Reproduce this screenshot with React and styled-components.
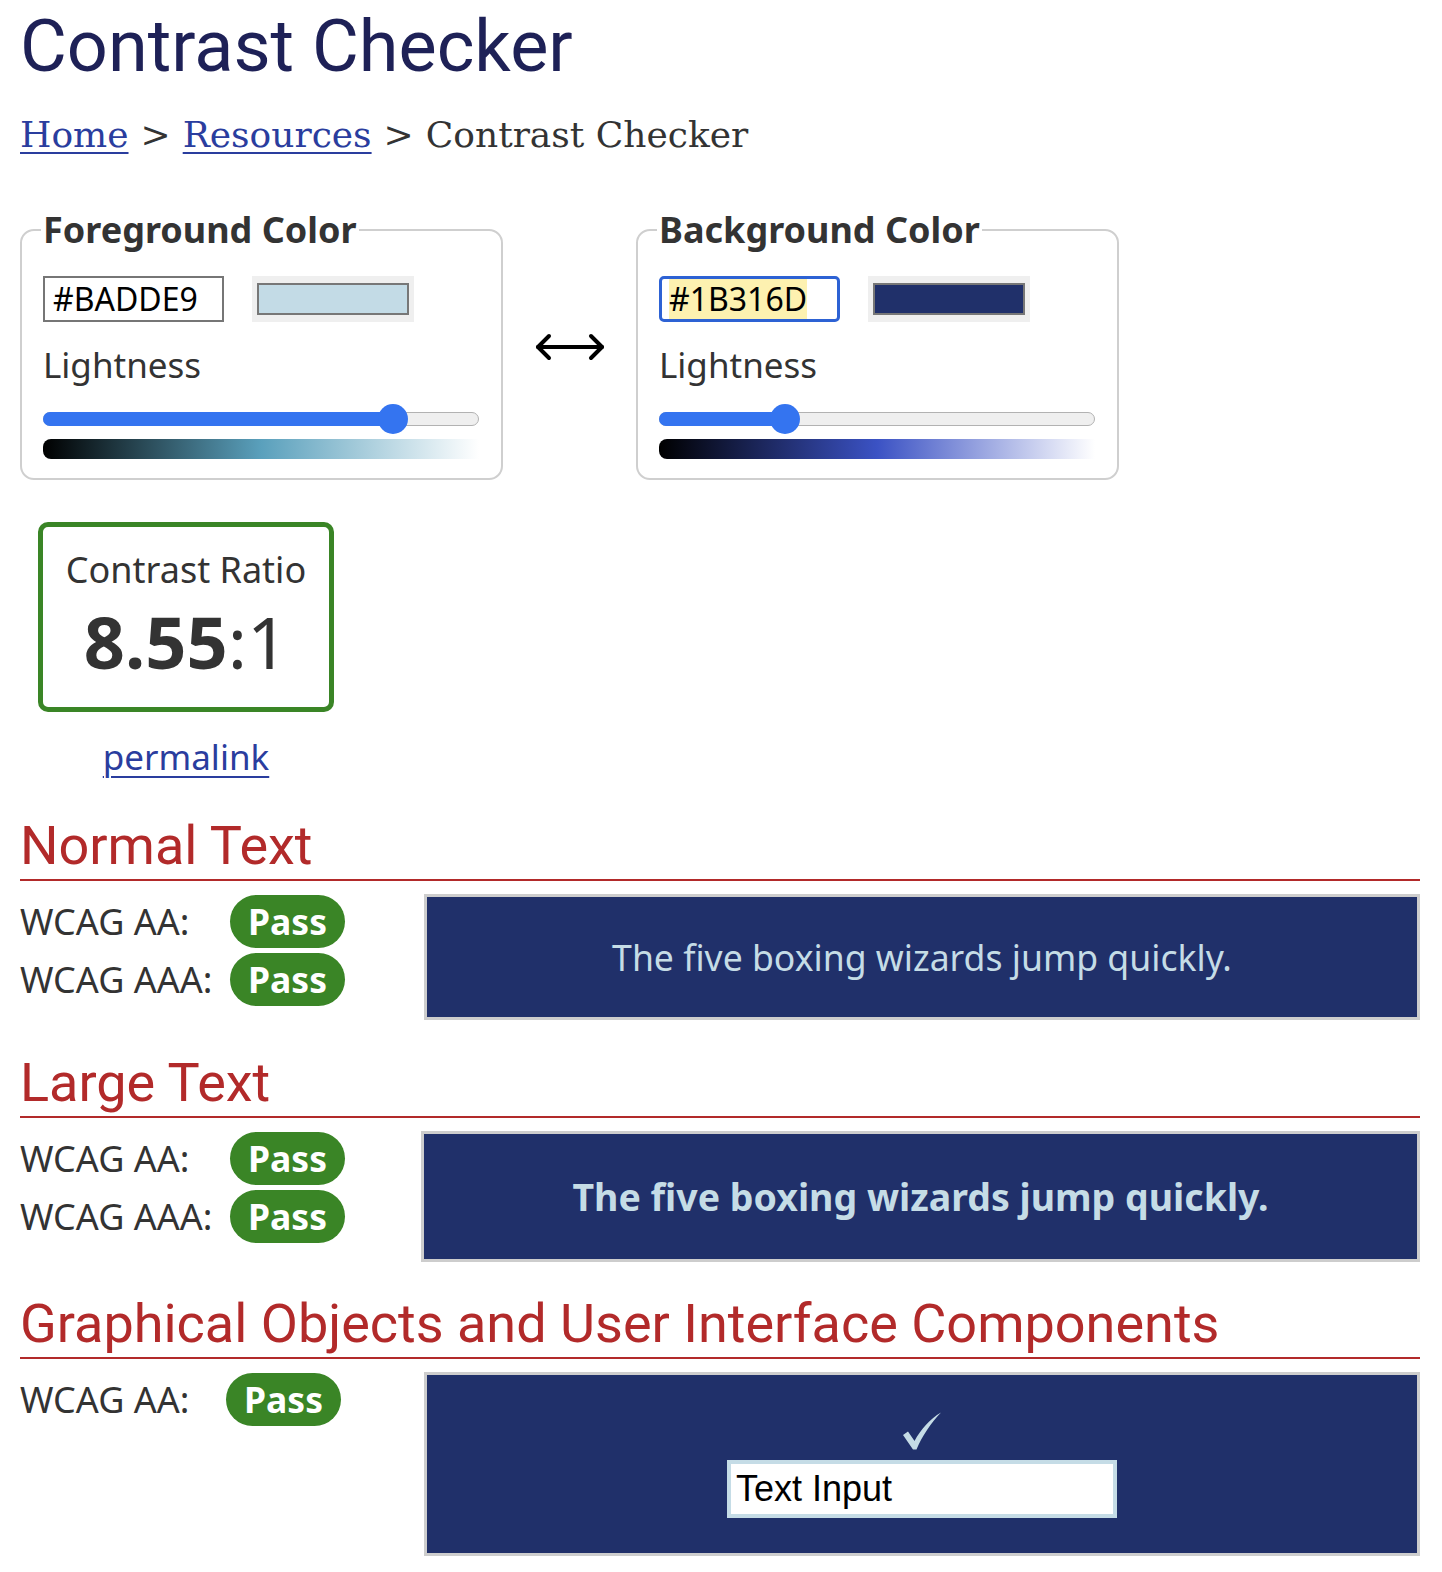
import React from "react";
import styled, { createGlobalStyle } from "styled-components";

const Global = createGlobalStyle`
  html, body { margin: 0; padding: 0; background: #fff; }
  body { font-family: "Noto Sans", "Open Sans", sans-serif; color: #333; }
  * { box-sizing: border-box; }
`;

const Page = styled.div`
  padding: 4px 22px 40px 20px;
`;

const Title = styled.h1`
  margin: 0;
  font-family: Roboto, "Liberation Sans", sans-serif;
  font-weight: 400;
  font-size: 72px;
  line-height: 86px;
  color: #1e2157;
`;

const Crumbs = styled.nav`
  margin-top: 25px;
  font-family: "DejaVu Serif", "Liberation Serif", serif;
  font-size: 36px;
  line-height: 40px;
  color: #333;
  display: flex;
  gap: 12px;
  align-items: baseline;
`;

const Link = styled.a`
  color: #2a3d9e;
  text-decoration: underline;
  text-decoration-thickness: 2px;
  text-underline-offset: 5px;
`;

const PickerRow = styled.div`
  margin-top: 52px;
  display: flex;
  align-items: center;
`;

const Fieldset = styled.fieldset`
  width: 483px;
  margin: 0;
  border: 2px solid #cfcfcf;
  border-radius: 14px;
  padding: 23px 22px 19px 21px;
`;

const Legend = styled.legend`
  font-size: 36px;
  font-weight: 700;
  line-height: 46px;
  padding: 0 2px;
  margin-left: -2px;
  color: #333;
`;

const InputRow = styled.div`
  display: flex;
  align-items: center;
  gap: 28px;
  height: 46px;
`;

const HexBox = styled.div`
  width: 181px;
  height: 46px;
  border: ${(p) => (p.$focused ? "3px solid #2d62d4" : "2px solid #767676")};
  border-radius: ${(p) => (p.$focused ? "5px" : "0")};
  padding: 0 ${(p) => (p.$focused ? "7px" : "8px")};
  display: flex;
  align-items: stretch;
  font-size: 32px;
  color: #000;
`;

const HexText = styled.span`
  display: flex;
  align-items: center;
  padding-bottom: 2px;
  background: ${(p) => (p.$selected ? "#fdf1b0" : "transparent")};
`;

const SwatchWell = styled.div`
  width: 162px;
  height: 46px;
  background: #efefef;
  padding: 7px 5px;
`;

const Swatch = styled.div`
  width: 100%;
  height: 100%;
  border: 2px solid #777;
  background: ${(p) => p.$color};
`;

const Label = styled.div`
  margin-top: 20px;
  font-size: 35px;
  line-height: 46px;
  color: #333;
`;

const Track = styled.div`
  position: relative;
  margin-top: 24px;
  height: 14px;
  border-radius: 7px;
  background: #efefef;
  border: 1px solid #b2b2b2;
`;

const Fill = styled.div`
  position: absolute;
  left: -1px;
  top: -1px;
  bottom: -1px;
  border-radius: 7px;
  background: #3474f0;
`;

const Thumb = styled.div`
  position: absolute;
  top: 50%;
  width: 30px;
  height: 30px;
  border-radius: 50%;
  background: #3474f0;
  transform: translate(-50%, -50%);
`;

const Gradient = styled.div`
  margin-top: 13px;
  height: 20px;
  border-radius: 8px 0 0 8px;
  background: linear-gradient(to right, #000 0%, ${(p) => p.$mid} 50%, #fff 100%);
`;

const Swap = styled.div`
  width: 133px;
  display: flex;
  justify-content: center;
  margin-top: 6px;
`;

const RatioBlock = styled.div`
  margin: 42px 0 0 18px;
  width: 296px;
`;

const RatioBox = styled.div`
  height: 190px;
  border: 5px solid #3a8526;
  border-radius: 10px;
  display: flex;
  flex-direction: column;
  align-items: center;
  padding-top: 21px;
`;

const RatioLabel = styled.div`
  font-size: 36px;
  line-height: 44px;
  color: #333;
`;

const RatioValue = styled.div`
  font-size: 72px;
  line-height: 98px;
  color: #333;
  b { font-weight: 700; }
`;

const Permalink = styled.div`
  margin-top: 21px;
  text-align: center;
  font-size: 35px;
  line-height: 48px;
`;

const PermaLinkA = styled.a`
  color: #2a3d9e;
  text-decoration: underline;
  text-decoration-thickness: 2px;
  text-underline-offset: 6px;
`;

const SectionTitle = styled.h2`
  margin: ${(p) => p.$mt}px 0 0;
  font-family: Roboto, "Liberation Sans", sans-serif;
  font-weight: 400;
  font-size: 54px;
  line-height: 64px;
  color: #b22a2a;
  border-bottom: 2px solid #b22a2a;
  padding-bottom: 1px;
`;

const Result = styled.div`
  display: flex;
  align-items: flex-start;
  margin-top: 13px;
`;

const Criteria = styled.div`
  width: ${(p) => p.$w}px;
  flex: none;
  display: flex;
  flex-direction: column;
  gap: 5px;
  padding-top: 1px;
`;

const CriterionRow = styled.div`
  display: flex;
  align-items: center;
`;

const CriterionLabel = styled.div`
  width: ${(p) => p.$w}px;
  font-size: 36px;
  line-height: 53px;
  color: #333;
`;

const Pill = styled.span`
  width: 115px;
  height: 53px;
  border-radius: 27px;
  background: #3a8526;
  color: #fff;
  font-weight: 700;
  font-size: 35.5px;
  display: flex;
  align-items: center;
  justify-content: center;
  padding-bottom: 2px;
`;

const Sample = styled.div`
  flex: 1;
  height: ${(p) => p.$h}px;
  background: #20306a;
  border: 3px solid #cdcdcd;
  color: #c5dce6;
  display: flex;
  flex-direction: column;
  align-items: center;
  justify-content: center;
  font-size: ${(p) => (p.$bold ? "37.5px" : "35.6px")};
  font-weight: ${(p) => (p.$bold ? 700 : 400)};
`;

const Check = styled.svg`
  width: 40px;
  height: 38px;
  margin-top: 2px;
`;

const DemoInput = styled.div`
  margin-top: 10px;
  width: 390px;
  height: 58px;
  background: #fff;
  border: 4px solid #c5dce6;
  font-family: "Liberation Sans", Arial, sans-serif;
  font-size: 36px;
  color: #000;
  display: flex;
  align-items: center;
  padding-left: 5px;
`;

function Slider({ value }) {
  return (
    <Track>
      <Fill style={{ width: `calc(${value}% + 2px)` }} />
      <Thumb style={{ left: `${value}%` }} />
    </Track>
  );
}

function ColorPicker({ legend, hex, swatch, value, mid, focused }) {
  return (
    <Fieldset>
      <Legend>{legend}</Legend>
      <InputRow>
        <HexBox $focused={focused}>
          <HexText $selected={focused}>{hex}</HexText>
        </HexBox>
        <SwatchWell>
          <Swatch $color={swatch} />
        </SwatchWell>
      </InputRow>
      <Label>Lightness</Label>
      <Slider value={value} />
      <Gradient $mid={mid} />
    </Fieldset>
  );
}

function Criterion({ label, w = 210 }) {
  return (
    <CriterionRow>
      <CriterionLabel $w={w}>{label}</CriterionLabel>
      <Pill>Pass</Pill>
    </CriterionRow>
  );
}

export default function App() {
  return (
    <>
      <Global />
      <Page>
        <Title>Contrast Checker</Title>
        <Crumbs>
          <Link href="#">Home</Link>
          <span>&gt;</span>
          <Link href="#">Resources</Link>
          <span>&gt;</span>
          <span>Contrast Checker</span>
        </Crumbs>

        <PickerRow>
          <ColorPicker legend="Foreground Color" hex="#BADDE9" swatch="#c3dbe6" value={80.3} mid="#5aa0bc" />
          <Swap>
            <svg width="70" height="32" viewBox="0 0 70 32" fill="none" stroke="#000" strokeWidth="4" strokeLinecap="round" strokeLinejoin="round">
              <path d="M3 16 H67" />
              <path d="M14 5 L3 16 L14 27" />
              <path d="M56 5 L67 16 L56 27" />
            </svg>
          </Swap>
          <ColorPicker legend="Background Color" hex="#1B316D" swatch="#20306a" value={28.7} mid="#3b52c4" focused />
        </PickerRow>

        <RatioBlock>
          <RatioBox>
            <RatioLabel>Contrast Ratio</RatioLabel>
            <RatioValue><b>8.55</b>:1</RatioValue>
          </RatioBox>
          <Permalink>
            <PermaLinkA href="#">permalink</PermaLinkA>
          </Permalink>
        </RatioBlock>

        <SectionTitle $mt={33}>Normal Text</SectionTitle>
        <Result>
          <Criteria $w={404}>
            <Criterion label="WCAG AA:" />
            <Criterion label="WCAG AAA:" />
          </Criteria>
          <Sample $h={126}>The five boxing wizards jump quickly.</Sample>
        </Result>

        <SectionTitle $mt={31}>Large Text</SectionTitle>
        <Result>
          <Criteria $w={401}>
            <Criterion label="WCAG AA:" />
            <Criterion label="WCAG AAA:" />
          </Criteria>
          <Sample $h={131} $bold>The five boxing wizards jump quickly.</Sample>
        </Result>

        <SectionTitle $mt={30}>Graphical Objects and User Interface Components</SectionTitle>
        <Result>
          <Criteria $w={404}>
            <Criterion label="WCAG AA:" w={206} />
          </Criteria>
          <Sample $h={184}>
            <Check viewBox="0 0 40 38">
              <path d="M1 23 L6 19.5 L12.5 29 C19 17 28 7 39 0.5 C29 11 20 24 14.5 37.5 L11 37.5 Z" fill="#c5dce6" />
            </Check>
            <DemoInput>Text Input</DemoInput>
          </Sample>
        </Result>
      </Page>
    </>
  );
}
